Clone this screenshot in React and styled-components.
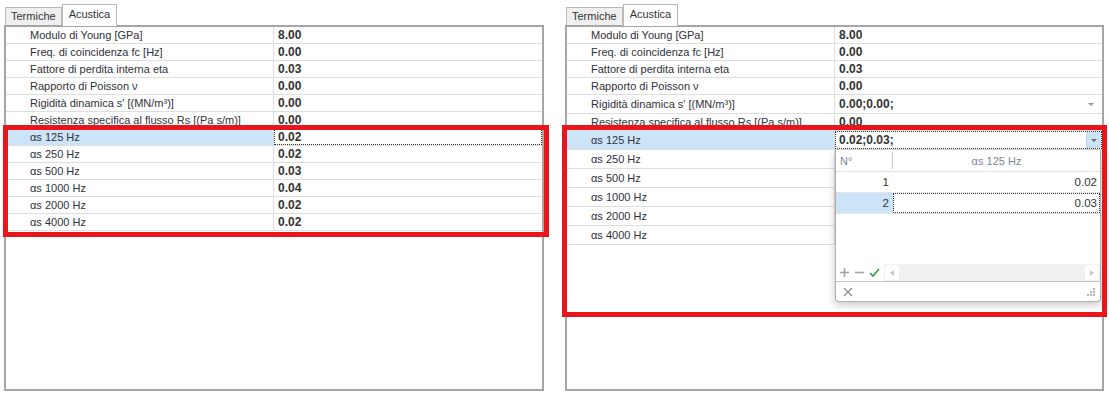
import React from 'react'
import styled, { createGlobalStyle } from 'styled-components'

const GlobalStyle = createGlobalStyle`
  html, body {
    margin: 0;
    padding: 0;
    background: #ffffff;
  }
  body {
    font-family: "Liberation Sans", Arial, sans-serif;
    font-size: 11px;
    color: #2f2f2f;
  }
`

const props = [
  { label: 'Modulo di Young [GPa]', value: '8.00' },
  { label: 'Freq. di coincidenza fc [Hz]', value: '0.00' },
  { label: 'Fattore di perdita interna eta', value: '0.03' },
  { label: 'Rapporto di Poisson ν', value: '0.00' },
  { label: 'Rigidità dinamica s\' [(MN/m³)]', value: '0.00', alt: '0.00;0.00;' },
  { label: 'Resistenza specifica al flusso Rs [(Pa s/m)]', value: '0.00' },
]

const bands = [
  { label: 'αs 125 Hz', value: '0.02' },
  { label: 'αs 250 Hz', value: '0.02' },
  { label: 'αs 500 Hz', value: '0.03' },
  { label: 'αs 1000 Hz', value: '0.04' },
  { label: 'αs 2000 Hz', value: '0.02' },
  { label: 'αs 4000 Hz', value: '0.02' },
]

const Page = styled.div`
  display: flex;
  gap: 21px;
  padding: 4px 0 0 4px;
`

const Panel = styled.div`
  position: relative;
  display: flex;
  flex-direction: column;
  width: ${p => p.$w}px;
`

const TabBar = styled.div`
  display: flex;
  align-items: flex-end;
  height: 21px;
  padding-left: 1px;
`

const Tab = styled.div`
  box-sizing: border-box;
  height: ${p => (p.$active ? 22 : 18)}px;
  margin-bottom: ${p => (p.$active ? -1 : 0)}px;
  padding: ${p => (p.$active ? '3px 6px 0 6px' : '2px 5px 0 5px')};
  font-size: 11px;
  color: #333;
  background: ${p => (p.$active ? '#ffffff' : '#efefef')};
  border: 1px solid #b8b8b8;
  border-bottom: none;
  position: relative;
  z-index: 1;
`

const Frame = styled.div`
  position: relative;
  height: 362px;
  border: 2px solid #a6a6a6;
  background: #ffffff;
`

const Row = styled.div`
  box-sizing: border-box;
  display: flex;
  height: ${p => p.$h}px;
  border-bottom: 1px solid #dedede;
`

const Label = styled.div`
  width: 243px;
  flex: none;
  padding-left: 24px;
  display: flex;
  align-items: center;
  white-space: nowrap;
  overflow: hidden;
  color: #30323a;
  background: ${p => (p.$selected ? '#cce4f7' : 'transparent')};
  border-right: 1px solid #dedede;
`

const Value = styled.div`
  position: relative;
  flex: 1;
  display: flex;
  align-items: center;
  padding-left: 4px;
  font-size: 12px;
  font-weight: bold;
  color: #333;
  outline: ${p => (p.$focused ? '1px dotted #333' : 'none')};
  outline-offset: -1px;
`

const SmallArrow = styled.span`
  position: absolute;
  right: ${p => p.$r || 8}px;
  top: 50%;
  margin-top: -1px;
  border-left: 3px solid transparent;
  border-right: 3px solid transparent;
  border-top: 3px solid ${p => p.$c || '#9a9a9a'};
`

const DropButton = styled.div`
  position: absolute;
  right: 1px;
  top: 1px;
  bottom: 1px;
  width: 14px;
  background: #cce4f7;
  border-left: 1px solid #b9d4ea;
`

const Annotation = styled.div`
  position: absolute;
  box-sizing: border-box;
  left: ${p => p.$x}px;
  top: ${p => p.$y}px;
  width: ${p => p.$w}px;
  height: ${p => p.$h}px;
  border: 5px solid #e8151d;
  z-index: 5;
  pointer-events: none;
`

const Popup = styled.div`
  position: absolute;
  left: 268px;
  top: 123px;
  width: 264px;
  height: 151px;
  display: flex;
  flex-direction: column;
  background: #ffffff;
  border: 1px solid #b0b0b0;
  border-top: none;
  border-radius: 0 0 4px 4px;
  box-shadow: 0 3px 8px rgba(0, 0, 0, 0.22);
  z-index: 4;
`

const GridHead = styled.div`
  display: flex;
  height: 21px;
  border-bottom: 1px solid #e2e2e2;
  color: #7b879a;
  font-size: 11px;
`

const HeadCell = styled.div`
  display: flex;
  align-items: center;
  justify-content: ${p => (p.$center ? 'center' : 'flex-start')};
  width: ${p => (p.$w ? `${p.$w}px` : 'auto')};
  flex: ${p => (p.$w ? 'none' : 1)};
  padding-left: ${p => (p.$center ? 0 : 4)}px;
  box-sizing: border-box;
  border-right: ${p => (p.$sep ? '1px solid #c8c8c8' : 'none')};
  margin: 2px 0;
`

const GridRow = styled.div`
  display: flex;
  height: 20px;
  border-bottom: 1px solid #e6e6e6;
  color: #333;
  font-size: 11.5px;
`

const NumCell = styled.div`
  width: 57px;
  box-sizing: border-box;
  display: flex;
  align-items: center;
  justify-content: flex-end;
  padding-right: 4px;
  background: ${p => (p.$selected ? '#cce4f7' : 'transparent')};
`

const ValCell = styled.div`
  flex: 1;
  display: flex;
  align-items: center;
  justify-content: flex-end;
  padding-right: 3px;
  outline: ${p => (p.$focused ? '1px dotted #333' : 'none')};
  outline-offset: -1px;
`

const GridSpace = styled.div`
  flex: 1;
`

const Toolbar = styled.div`
  display: flex;
  align-items: center;
  height: 17px;
  flex: none;
  border-bottom: 1px solid #c4c4c4;
`

const ToolIcons = styled.div`
  display: flex;
  align-items: center;
  gap: 4px;
  padding: 0 4px 0 3px;
`

const ScrollTrack = styled.div`
  flex: 1;
  height: 100%;
  display: flex;
  justify-content: space-between;
  align-items: stretch;
  background: #f0f0f0;
`

const ScrollBtn = styled.div`
  width: 14px;
  margin: 1px;
  background: #ffffff;
  display: flex;
  align-items: center;
  justify-content: center;
`

const Footer = styled.div`
  height: 19px;
  flex: none;
  display: flex;
  align-items: center;
  justify-content: space-between;
  padding: 0 5px 0 7px;
`

const Plus = () => (
  <svg width="11" height="11" viewBox="0 0 11 11">
    <path d="M5.5 1v9M1 5.5h9" stroke="#a3a3a3" strokeWidth="1.6" />
  </svg>
)

const Minus = () => (
  <svg width="11" height="11" viewBox="0 0 11 11">
    <path d="M1 5.5h9" stroke="#a3a3a3" strokeWidth="1.6" />
  </svg>
)

const Check = () => (
  <svg width="11" height="11" viewBox="0 0 11 11">
    <path d="M1 6l3 3 6-7" fill="none" stroke="#3a9b4c" strokeWidth="1.7" />
  </svg>
)

const Tri = ({ dir }) => (
  <svg width="4" height="6" viewBox="0 0 4 6">
    <path d={dir === 'left' ? 'M4 0v6L0 3z' : 'M0 0v6l4-3z'} fill="#c6c6c6" />
  </svg>
)

const Close = () => (
  <svg width="10" height="10" viewBox="0 0 10 10">
    <path d="M1 1l8 8M9 1l-8 8" stroke="#8a8a8a" strokeWidth="1.1" />
  </svg>
)

const Grip = () => (
  <svg width="8" height="8" viewBox="0 0 8 8" fill="#b5b5b5">
    <rect x="6" y="0" width="2" height="2" />
    <rect x="3" y="3" width="2" height="2" />
    <rect x="6" y="3" width="2" height="2" />
    <rect x="0" y="6" width="2" height="2" />
    <rect x="3" y="6" width="2" height="2" />
    <rect x="6" y="6" width="2" height="2" />
  </svg>
)

function Tabs() {
  return (
    <TabBar>
      <Tab>Termiche</Tab>
      <Tab $active>Acustica</Tab>
    </TabBar>
  )
}

function LeftPanel() {
  return (
    <Panel $w={540}>
      <Tabs />
      <Frame>
        {props.map(r => (
          <Row key={r.label} $h={17}>
            <Label>{r.label}</Label>
            <Value>{r.value}</Value>
          </Row>
        ))}
        {bands.map((r, i) => (
          <Row key={r.label} $h={17}>
            <Label $selected={i === 0}>{r.label}</Label>
            <Value $focused={i === 0}>{r.value}</Value>
          </Row>
        ))}
      </Frame>
      <Annotation $x={-1} $y={121} $w={546} $h={112} />
    </Panel>
  )
}

function RightPanel() {
  return (
    <Panel $w={539}>
      <Tabs />
      <Frame>
        {props.map(r => (
          <Row key={r.label} $h={r.alt ? 19 : 17}>
            <Label>{r.label}</Label>
            <Value>
              {r.alt || r.value}
              {r.alt && <SmallArrow />}
            </Value>
          </Row>
        ))}
        {bands.map((r, i) => (
          <Row key={r.label} $h={19}>
            <Label $selected={i === 0}>{r.label}</Label>
            {i === 0 ? (
              <Value $focused>
                0.02;0.03;
                <DropButton>
                  <SmallArrow $c="#6d6d6d" $r={4} />
                </DropButton>
              </Value>
            ) : (
              <Value />
            )}
          </Row>
        ))}
        <Popup>
          <GridHead>
            <HeadCell $w={57} $sep>N°</HeadCell>
            <HeadCell $center>αs 125 Hz</HeadCell>
          </GridHead>
          <GridRow>
            <NumCell>1</NumCell>
            <ValCell>0.02</ValCell>
          </GridRow>
          <GridRow>
            <NumCell $selected>2</NumCell>
            <ValCell $focused>0.03</ValCell>
          </GridRow>
          <GridSpace />
          <Toolbar>
            <ToolIcons>
              <Plus />
              <Minus />
              <Check />
            </ToolIcons>
            <ScrollTrack>
              <ScrollBtn><Tri dir="left" /></ScrollBtn>
              <ScrollBtn><Tri dir="right" /></ScrollBtn>
            </ScrollTrack>
          </Toolbar>
          <Footer>
            <Close />
            <Grip />
          </Footer>
        </Popup>
      </Frame>
      <Annotation $x={-3} $y={121} $w={545} $h={192} />
    </Panel>
  )
}

export default function App() {
  return (
    <>
      <GlobalStyle />
      <Page>
        <LeftPanel />
        <RightPanel />
      </Page>
    </>
  )
}
